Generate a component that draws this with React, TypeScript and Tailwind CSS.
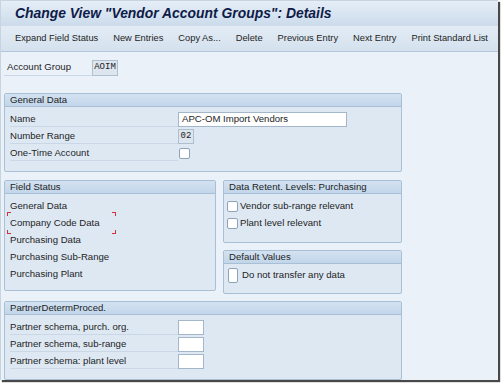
import React from "react";

const font = { fontFamily: '"Liberation Sans", Arial, sans-serif' };
const mono = { fontFamily: '"Liberation Mono", monospace' };

function Group({
  title,
  className,
  children,
}: {
  title: string;
  className?: string;
  children?: React.ReactNode;
}) {
  return (
    <div
      className={`flex flex-col border border-[#a9bfd6] bg-[#dde8f3] rounded-[2px] ${className ?? ""}`}
    >
      <div className="h-[13px] flex items-center px-[5px] bg-gradient-to-b from-[#d3e2f1] to-[#c2d6ea] border-b border-[#a9bfd6] text-[9.6px] leading-none text-[#1e1e1e]">
        {title}
      </div>
      {children}
    </div>
  );
}

function Row({
  label,
  children,
  line = true,
}: {
  label: string;
  children?: React.ReactNode;
  line?: boolean;
}) {
  return (
    <div className="h-[17px] flex items-center">
      <div
        className={`w-[168px] h-[15px] flex items-center text-[9.6px] text-[#1e1e1e] ${line ? "border-b border-[#c9d7e6]" : ""}`}
      >
        {label}
      </div>
      {children}
    </div>
  );
}

function Check({ tall = false }: { tall?: boolean }) {
  return (
    <div
      className={`bg-white border border-[#8fa3b8] rounded-[2px] ${tall ? "w-[10px] h-[15px]" : "w-[11px] h-[11px]"}`}
    />
  );
}

export default function App() {
  const actions = [
    "Expand Field Status",
    "New Entries",
    "Copy As...",
    "Delete",
    "Previous Entry",
    "Next Entry",
    "Print Standard List",
  ];

  return (
    <div className="w-[502px] h-[385px] bg-white" style={font}>
      <div className="w-[498px] h-[380px] bg-[#eaf1f8] border-t border-l border-[#c7d3df] shadow-[2px_2px_1px_rgba(40,40,40,0.85)] flex flex-col overflow-hidden">
        {/* title */}
        <div className="h-[26px] flex items-center pl-[14px] bg-gradient-to-b from-[#e6eef7] to-[#cbdbeb]">
          <span className="text-[13.9px] font-bold italic text-[#0e1b48] leading-none">
            Change View "Vendor Account Groups": Details
          </span>
        </div>

        {/* toolbar */}
        <div className="h-[26px] flex items-center gap-[15px] pl-[14px] bg-gradient-to-b from-[#e3ecf5] to-[#d4e1ee] border-b border-[#b3c6da]">
          {actions.map((a) => (
            <span key={a} className="text-[9.3px] text-[#1e1e1e] whitespace-nowrap">
              {a}
            </span>
          ))}
        </div>

        <div className="flex flex-col px-[3px]">
          {/* account group */}
          <div className="mt-[8px] h-[16px] flex items-center">
            <div className="w-[88px] h-[15px] flex items-center pl-[3px] border-b border-[#c9d7e6] text-[9.6px] text-[#1e1e1e]">
              Account Group
            </div>
            <div className="w-[26px] h-[16px] flex items-center justify-center bg-[#dde5ee] border border-[#aebfd0] text-[9px] text-[#222]" style={mono}>
              AOIM
            </div>
          </div>

          {/* general data */}
          <Group title="General Data" className="mt-[17px] w-[398px] h-[79px]">
            <div className="flex flex-col pl-[5px] pt-[4px]">
              <Row label="Name">
                <div className="w-[169px] h-[15px] flex items-center px-[3px] bg-white border border-[#a3b6ca] text-[9.6px] text-[#1e1e1e]">
                  APC-OM Import Vendors
                </div>
              </Row>
              <Row label="Number Range">
                <div className="w-[16px] h-[15px] flex items-center justify-center bg-[#dde5ee] border border-[#aebfd0] text-[9px] text-[#222]" style={mono}>
                  02
                </div>
              </Row>
              <Row label="One-Time Account">
                <div className="pl-[1px]">
                  <Check />
                </div>
              </Row>
            </div>
          </Group>

          {/* middle */}
          <div className="mt-[8px] flex gap-[7px]">
            <Group title="Field Status" className="w-[212px] h-[111px]">
              <div className="flex flex-col pl-[5px] pt-[4px] text-[9.6px] text-[#1e1e1e]">
                {[
                  "General Data",
                  "Company Code Data",
                  "Purchasing Data",
                  "Purchasing Sub-Range",
                  "Purchasing Plant",
                ].map((t, i) => (
                  <div key={t} className="h-[17px] flex items-center">
                    {i === 1 ? (
                      <span className="relative">
                        {t}
                        <span className="absolute -left-[3px] -top-[4px] w-[4px] h-[4px] border-l border-t border-[#d0343a]" />
                        <span className="absolute -left-[3px] -bottom-[3px] w-[4px] h-[4px] border-l border-b border-[#d0343a]" />
                        <span className="absolute -right-[16px] -top-[4px] w-[4px] h-[4px] border-r border-t border-[#d0343a]" />
                        <span className="absolute -right-[16px] -bottom-[3px] w-[4px] h-[4px] border-r border-b border-[#d0343a]" />
                      </span>
                    ) : (
                      t
                    )}
                  </div>
                ))}
              </div>
            </Group>

            <div className="flex flex-col gap-[7px]">
              <Group title="Data Retent. Levels: Purchasing" className="w-[179px] h-[63px]">
                <div className="flex flex-col pl-[3px] pt-[4px] text-[9.6px] text-[#1e1e1e]">
                  <div className="h-[17px] flex items-center gap-[2px]">
                    <Check />
                    Vendor sub-range relevant
                  </div>
                  <div className="h-[17px] flex items-center gap-[2px]">
                    <Check />
                    Plant level relevant
                  </div>
                </div>
              </Group>
              <Group title="Default Values" className="w-[179px] h-[44px]">
                <div className="flex items-center gap-[4px] pl-[4px] pt-[4px] text-[9.6px] text-[#1e1e1e]">
                  <Check tall />
                  Do not transfer any data
                </div>
              </Group>
            </div>
          </div>

          {/* partner */}
          <Group title="PartnerDetermProced." className="mt-[7px] w-[398px] h-[79px]">
            <div className="flex flex-col pl-[5px] pt-[4px]">
              {[
                "Partner schema, purch. org.",
                "Partner schema, sub-range",
                "Partner schema: plant level",
              ].map((t) => (
                <Row key={t} label={t}>
                  <div className="w-[26px] h-[15px] bg-white border border-[#a3b6ca]" />
                </Row>
              ))}
            </div>
          </Group>
        </div>
      </div>
    </div>
  );
}
